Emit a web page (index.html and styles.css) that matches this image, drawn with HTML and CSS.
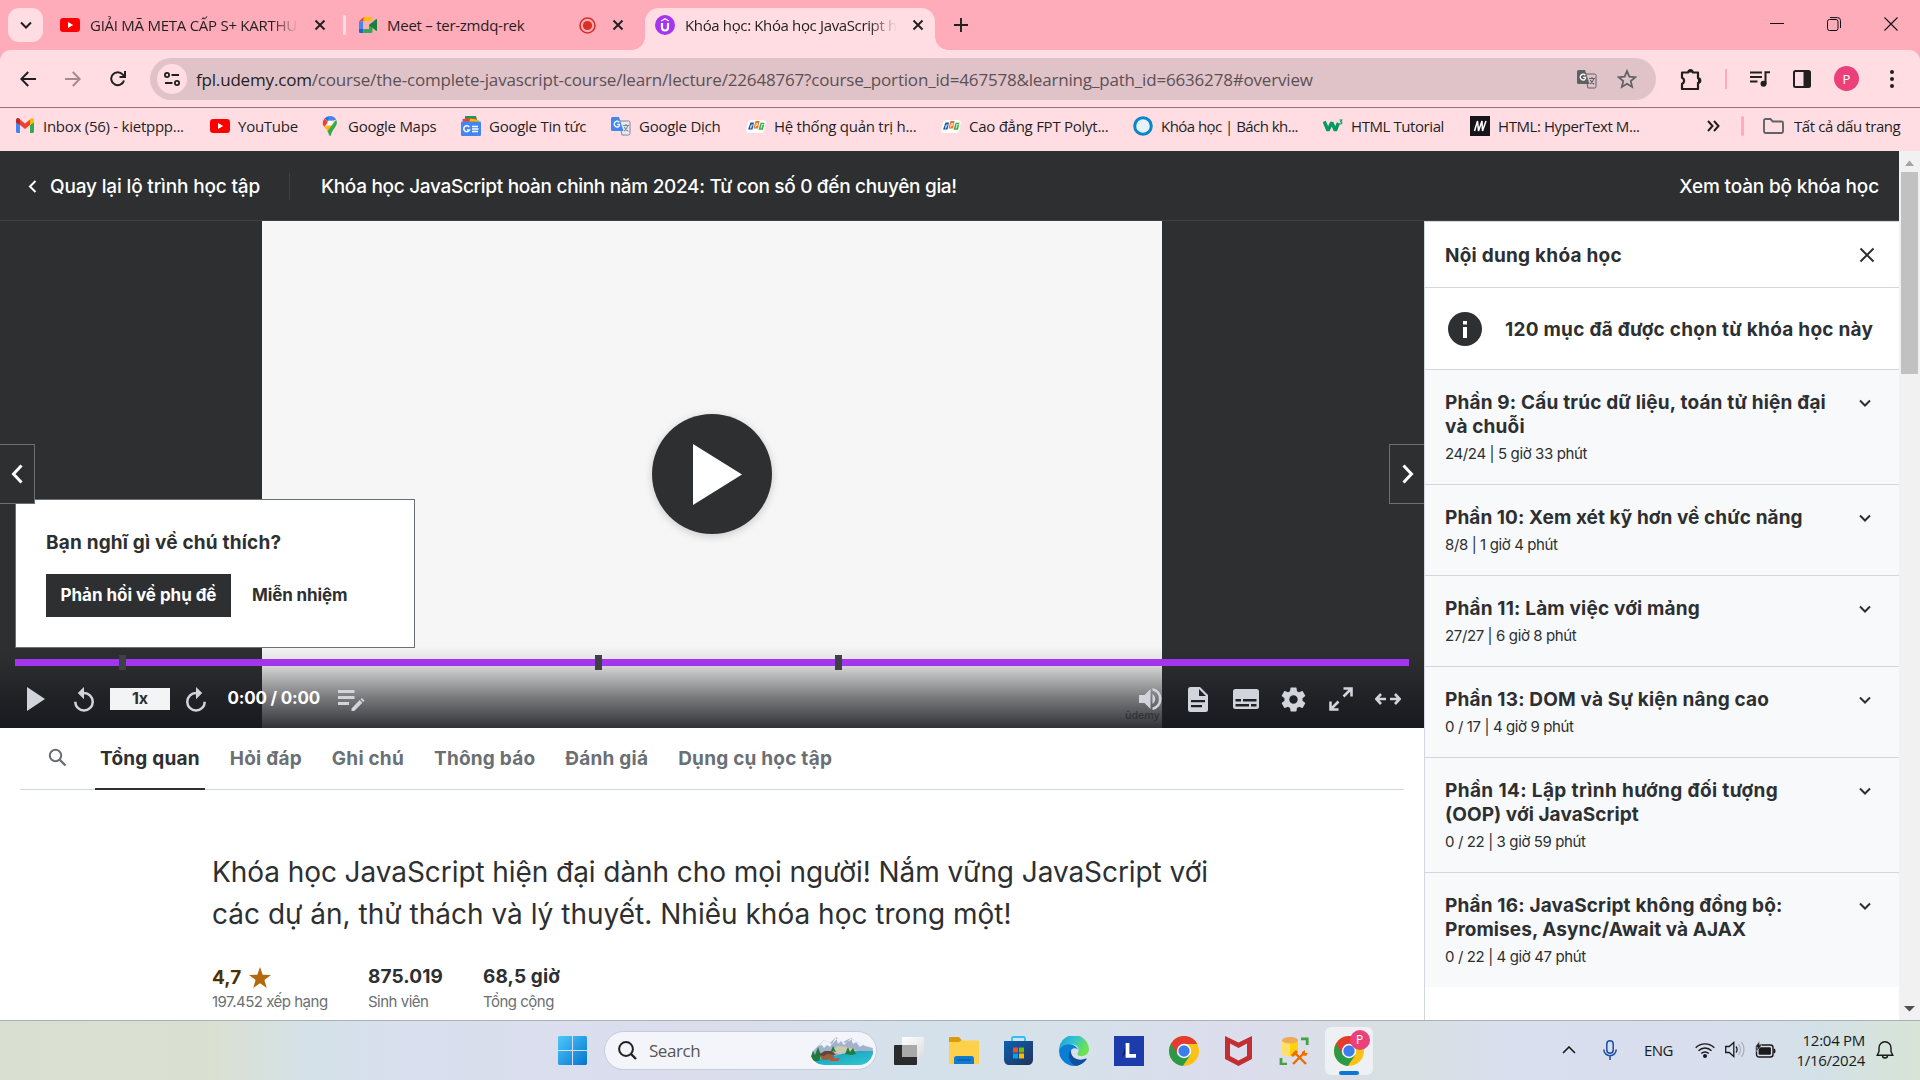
FILE: index.html
```html
<!DOCTYPE html>
<html lang="vi">
<head>
<meta charset="utf-8">
<title>Khóa học: Khóa học JavaScript hoàn chỉnh năm 2024</title>
<link rel="stylesheet" href="styles.css">
</head>
<body>
<svg class="defs" width="0" height="0">
  <defs>
    <symbol id="close" viewBox="0 0 12 12"><path d="M1.5 1.5l9 9m0-9l-9 9" fill="none" stroke="currentColor" stroke-width="1.9"/></symbol>
    <symbol id="chev" viewBox="0 0 14 14"><path d="M2 4.5l5 5 5-5" fill="none" stroke="currentColor" stroke-width="2"/></symbol>
    <symbol id="youtube" viewBox="0 0 20 14"><rect width="20" height="14" rx="3.2" fill="#f00"/><path d="M8 4l5.2 3L8 10z" fill="#fff"/></symbol>
    <symbol id="translate" viewBox="0 0 20 20"><path d="M8 5h9.5a1.5 1.5 0 011.5 1.5v11a1.5 1.5 0 01-1.5 1.5H11z" fill="var(--paper)" stroke="var(--line)"/><path d="M1.5 1H8l4.5 14H1.5A1.5 1.5 0 010 13.500v-11A1.500 1.500 0 011.500 1z" fill="var(--front)"/><path d="M8.300 6.200A2.900 2.900 0 106.200 11c1.600 0 2.500-1.100 2.400-2.700H6.200" fill="none" stroke="#fff" stroke-width="1.300"/><path d="M12 9.500h6M15 8v1.500m1.800 0c-.5 2.500-2 4.500-3.800 5.500m.3-4c.8 2 2.300 3.500 4 4.200" fill="none" stroke="var(--line)" stroke-width="1.100"/></symbol>
    <symbol id="fpt" viewBox="0 0 20 14"><path d="M4 1h14l2 2-2 9-2 2H2L0 12l2-9z" fill="#fff"/><path d="M4.500 3.500h3.500L6.500 10.500H2z" fill="#1c56a6"/><path d="M9.500 2h4L12 9.500H7.500z" fill="#f37021"/><path d="M14.500 3.800H18.500L17 10.800h-4.500z" fill="#3fae49"/><path d="M4.500 9.500l.7-3.500H7M4.500 7.800h1.500M9.500 8.500l.9-4h1.300l-.5 2H10M15.500 5.500h2M16 5.500l-.9 3.800" stroke="#fff" stroke-width=".8" fill="none"/></symbol>
    <symbol id="chrome" viewBox="0 0 30 30"><circle cx="15" cy="15" r="15" fill="#fbc116"/><path d="M15 15L2 7.500A15 15 0 0013.800 29.950L21.500 18.700z" fill="#2a9a48"/><path d="M15 15V8h13.300A15 15 0 002 7.500l6.500 11z" fill="#e33b2e"/><circle cx="15" cy="15" r="7.200" fill="#fff"/><circle cx="15" cy="15" r="5.700" fill="#3b7ded"/></symbol>
  </defs>
</svg>

<header class="browser">
  <div class="tabstrip">
    <button class="tab-search"><svg width="14" height="14"><use href="#chev"/></svg></button>
    <div class="tab tab-a">
      <svg width="20" height="14"><use href="#youtube"/></svg>
      <span class="tab-title fade">GIẢI MÃ META CẤP S+ KARTHU</span>
      <svg class="x" width="12" height="12"><use href="#close"/></svg>
    </div>
    <div class="tab tab-b">
      <svg width="18" height="16" viewBox="0 0 18 16"><path d="M4.500 0H13v4H4.500z" fill="#fbbc04"/><path d="M4.500 0v4.500H0z" fill="#ea4335"/><path d="M0 4.500h4V12H0z" fill="#4285f4"/><path d="M0 12h4.500v4H1.300A1.300 1.300 0 010 14.700z" fill="#1967d2"/><path d="M4.500 12H10V8l3.500-2.500v9.300c0 .7-.5 1.200-1.200 1.200H4.500z" fill="#34a853"/><path d="M10 8l7-5.800c.5-.4 1-.1 1 .5v10.600c0 .6-.5.900-1 .5z" fill="#188038"/></svg>
      <span class="tab-title">Meet – ter-zmdq-rek</span>
      <svg class="rec" width="17" height="17" viewBox="0 0 17 17"><circle cx="8.500" cy="8.500" r="7.500" fill="none" stroke="#d93025" stroke-width="1.600"/><circle cx="8.500" cy="8.500" r="4.600" fill="#d93025"/></svg>
      <svg class="x" width="12" height="12"><use href="#close"/></svg>
    </div>
    <div class="tab tab-c active">
      <svg width="20" height="20" viewBox="0 0 20 20"><circle cx="10" cy="10" r="10" fill="#a435f0"/><path d="M7 8v4.500a3 3 0 006 0V8" fill="none" stroke="#fff" stroke-width="2.200"/><path d="M6.200 6L10 3.700 13.800 6" fill="none" stroke="#fff" stroke-width="1.400"/></svg>
      <span class="tab-title fade">Khóa học: Khóa học JavaScript h</span>
      <svg class="x" width="12" height="12"><use href="#close"/></svg>
    </div>
    <svg class="plus" width="14" height="14" viewBox="0 0 14 14"><path d="M7 0v14M0 7h14" stroke="#1f1f1f" stroke-width="1.900"/></svg>
    <div class="winctl">
      <svg width="14" height="14" viewBox="0 0 14 14"><path d="M0 6.500h14" stroke="#111"/></svg>
      <svg width="14" height="14" viewBox="0 0 14 14" fill="none" stroke="#111"><rect x=".5" y="2.500" width="10.500" height="11" rx="2"/><path d="M3 .6h7.500a3 3 0 013 3v7.500"/></svg>
      <svg width="14" height="14" viewBox="0 0 14 14"><path d="M.5.500l13 13m0-13l-13 13" stroke="#111" stroke-width="1.100"/></svg>
    </div>
  </div>

  <div class="toolbar">
    <div class="nav">
      <svg width="16" height="16" viewBox="0 0 16 16" fill="none" stroke="#1f1f1f" stroke-width="2"><path d="M16 8H1.500M8.200 1L1.300 8l6.900 7"/></svg>
      <svg width="16" height="16" viewBox="0 0 16 16" fill="none" stroke="#a8898f" stroke-width="2"><path d="M0 8h14.500M7.800 1l6.900 7-6.900 7"/></svg>
      <svg width="16" height="16" viewBox="0 0 16 16" fill="none" stroke="#1f1f1f" stroke-width="2"><path d="M14 9.500A6.500 6.500 0 1112.800 3.600L15 6"/><path d="M15 0v6H9.500"/></svg>
    </div>
    <div class="omnibox">
      <span class="site"><svg width="16" height="14" viewBox="0 0 16 14" fill="none" stroke="#1f1f1f" stroke-width="1.800"><circle cx="3" cy="3" r="2.100"/><path d="M7.500 3H15M1 11h7.500"/><circle cx="13" cy="11" r="2.100"/></svg></span>
      <span class="url"><b>fpl.udemy.com</b>/course/the-complete-javascript-course/learn/lecture/22648767?course_portion_id=467578&amp;learning_path_id=6636278#overview</span>
      <svg class="tr grey" width="20" height="20"><use href="#translate"/></svg>
      <svg class="star" width="20" height="20" viewBox="0 0 24 24"><path d="M12 2.500l2.800 6.700 7.200.6-5.500 4.700 1.700 7.100-6.200-3.800-6.200 3.800 1.700-7.100L2 9.800l7.200-.6z" fill="none" stroke="#5f6063" stroke-width="2.100"/></svg>
    </div>
    <div class="actions">
      <svg width="22" height="22" viewBox="0 0 22 22"><path d="M2 4.500h6.200a2.300 2.300 0 014.600 0H18v5.800a2.300 2.300 0 010 4.600V21H2v-5.300a3.200 3.200 0 000-6z" fill="none" stroke="#1f1f1f" stroke-width="2.200" stroke-linejoin="round"/><path d="M8 4.500a2.500 2.500 0 015 0zM18 10a2.500 2.500 0 010 5z" fill="#1f1f1f"/></svg>
      <i class="bar"></i>
      <svg width="20" height="16" viewBox="0 0 20 16"><path d="M0 1.500h12M0 6h12M0 10.500h7.500" stroke="#1f1f1f" stroke-width="2"/><path d="M15.500 13V1.200H20" fill="none" stroke="#1f1f1f" stroke-width="2"/><circle cx="13.500" cy="12.800" r="3" fill="#1f1f1f"/></svg>
      <svg width="18" height="18" viewBox="0 0 18 18"><rect x="1" y="1" width="16" height="16" rx="1.500" fill="none" stroke="#1f1f1f" stroke-width="2"/><path d="M10.500 1H17v16h-6.500z" fill="#1f1f1f"/></svg>
      <span class="avatar">P</span>
      <svg class="dots" width="4" height="18" viewBox="0 0 4 18" fill="#1f1f1f"><circle cx="2" cy="2" r="2"/><circle cx="2" cy="9" r="2"/><circle cx="2" cy="16" r="2"/></svg>
    </div>
  </div>

  <nav class="bookmarks">
    <div class="marks">
      <a><svg width="20" height="15" viewBox="0 0 20 15"><path d="M1 2.500V13.500C1 14.300 1.600 15 2.400 15H5V7z" fill="#4285f4"/><path d="M15 7v8h2.600c.8 0 1.400-.7 1.400-1.500V2.500z" fill="#34a853"/><path d="M5 7V1.500l5 4 5-4V7l-5 4z" fill="#ea4335"/><path d="M1 4.500V2C1 .2 3 -.6 4.300 .5L5 1.200V7z" fill="#c5221f"/><path d="M15 1.200l.7-.7C17-.6 19 .2 19 2v2.500L15 7z" fill="#fbbc04"/></svg><span>Inbox (56) - kietppp...</span></a>
      <a><svg width="20" height="14"><use href="#youtube"/></svg><span>YouTube</span></a>
      <a><svg width="20" height="20" viewBox="0 0 20 20"><path d="M10 0a7 7 0 00-5.400 2.500L8 5.500z" fill="#1a73e8"/><path d="M4.600 2.500A7 7 0 004.200 11L8 6z" fill="#ea4335"/><path d="M10 0a7 7 0 016.200 3.700L10.500 5 8 5.500z" fill="#4285f4"/><path d="M4.200 11l4 4.500L16.200 3.700 12 8z" fill="#fbbc04"/><path d="M16.200 3.700C19 9.500 12.500 12.500 11 19c-.3 1.300-1.500 1.300-1.900 0-.4-1.500-1-2.700-1.700-3.800z" fill="#34a853"/><circle cx="10" cy="7" r="2.600" fill="#fff"/></svg><span>Google Maps</span></a>
      <a><svg width="20" height="20" viewBox="0 0 20 20"><path d="M4 0h11l2 7H4z" fill="#0f9d58"/><path d="M1.500 3l13-1.500L16 7H2z" fill="#ea4335"/><path d="M9 2.500l9 1.500-1 4H8z" fill="#fbbc04"/><rect y="5.500" width="20" height="14.500" rx="1.200" fill="#4285f4"/><path d="M8.300 11a3 3 0 10.200 3H6.200M11 10.500h6M11 13h6.500M11 15.500h6" fill="none" stroke="#fff" stroke-width="1.500"/></svg><span>Google Tin tức</span></a>
      <a><svg class="blue" width="20" height="20"><use href="#translate"/></svg><span>Google Dịch</span></a>
      <a><svg width="20" height="14"><use href="#fpt"/></svg><span>Hệ thống quản trị h...</span></a>
      <a><svg width="20" height="14"><use href="#fpt"/></svg><span>Cao đẳng FPT Polyt...</span></a>
      <a class="tighter"><svg width="20" height="20" viewBox="0 0 20 20"><circle cx="10" cy="10" r="8.300" fill="#e6f2fa" stroke="#0b86ca" stroke-width="3"/></svg><span>Khóa học | Bách kh...</span></a>
      <a class="tight"><svg width="20" height="14" viewBox="0 0 20 14"><path d="M1.200 2.500l3.800 9 3.700-8 3.700 8 3-7.500" fill="none" stroke="#059862" stroke-width="3.400" stroke-linejoin="bevel"/><path d="M16.500 1h2.300l-1.300 1.700c2.200.2 1.700 2.800-1 2.100" fill="none" stroke="#059862" stroke-width="1.100"/></svg><span>HTML Tutorial</span></a>
      <a class="tight"><svg width="20" height="20" viewBox="0 0 20 20"><rect width="20" height="20" fill="#15141a"/><path d="M4.500 15l3-10 1 10 3.500-10 .5 10L16 5" fill="none" stroke="#fff" stroke-width="1.500"/></svg><span>HTML: HyperText M...</span></a>
    </div>
    <svg width="13" height="12" viewBox="0 0 13 12"><path d="M1 1l4.500 5L1 11M7 1l4.500 5L7 11" fill="none" stroke="#1f1f1f" stroke-width="2"/></svg>
    <i class="bar"></i>
    <svg class="folder" width="21" height="16" viewBox="0 0 21 16"><path d="M1 13V2.500C1 1.500 1.700 1 2.500 1h5l2.300 2.500h8.700c.8 0 1.500.5 1.500 1.500v8.500c0 .8-.7 1.500-1.500 1.500h-16C1.700 15 1 14 1 13z" fill="none" stroke="#5f6368" stroke-width="1.900"/></svg>
    <span class="tight">Tất cả dấu trang</span>
  </nav>
</header>

<div class="viewport">
  <div class="page">
    <header class="course-head">
      <svg width="9" height="13" viewBox="0 0 9 13"><path d="M7.500 1L2 6.500 7.500 12" fill="none" stroke="#fff" stroke-width="2"/></svg>
      <a class="back">Quay lại lộ trình học tập</a>
      <h1>Khóa học JavaScript hoàn chỉnh năm 2024: Từ con số 0 đến chuyên gia!</h1>
      <a class="all">Xem toàn bộ khóa học</a>
    </header>

    <div class="columns">
      <main>
        <section class="player">
          <div class="frame"></div>
          <span class="watermark">ûdemy</span>
          <div class="shade"></div>
          <div class="bigplay"><svg width="49" height="61" viewBox="0 0 50 62"><path d="M0 0l50 31L0 62z" fill="#fff"/></svg></div>
          <div class="popup">
            <h2>Bạn nghĩ gì về chú thích?</h2>
            <div class="popup-row"><button class="solid">Phản hồi về phụ đề</button><button class="ghost">Miễn nhiệm</button></div>
          </div>
          <div class="side prev"><svg width="12" height="20" viewBox="0 0 12 20"><path d="M10.500 1.500L2.500 10l8 8.500" fill="none" stroke="#fff" stroke-width="3"/></svg></div>
          <div class="side next"><svg width="12" height="20" viewBox="0 0 12 20"><path d="M1.500 1.500l8 8.500-8 8.500" fill="none" stroke="#fff" stroke-width="3"/></svg></div>
          <div class="progress"><i class="m1"></i><i class="m2"></i><i class="m3"></i></div>
          <div class="controls">
            <span class="c"><svg width="18" height="24" viewBox="0 0 18 24"><path d="M0 0l18 12L0 24z"/></svg></span>
            <span class="c back10"><svg width="20" height="25" viewBox="0 0 20 25"><path d="M10 0v4.800a10 10 0 11-10 10h2.500A7.500 7.500 0 1010 7.300v5L3.800 6z"/></svg></span>
            <span class="speed">1x</span>
            <span class="c"><svg width="20" height="25" viewBox="0 0 20 25"><path d="M10 0v4.800a10 10 0 1010 10h-2.500A7.500 7.500 0 1110 7.300v5L16.200 6z"/></svg></span>
            <span class="time">0:00 / 0:00</span>
            <svg class="note" width="27" height="23" viewBox="0 0 27 23"><path d="M0 1h16.500v3H0zM0 7h16.500v3H0zM0 13h11v3H0zM13.500 19.500l8.200-8.500 2.700 2.700-8.200 8.300h-2.700zM22.500 10.200l1.300-1.300 2.800 2.800-1.300 1.300z"/></svg>
            <div class="right">
              <span class="c"><svg width="24" height="24" viewBox="0 0 24 24"><path d="M0 8v8h5.500l6 6V2l-6 6zM13.500 7v10a6 6 0 000-10zM13.500 1v2.600a8.700 8.700 0 010 16.800V23a11.200 11.200 0 000-22z"/></svg></span>
              <span class="c"><svg width="20" height="25" viewBox="0 0 20 25"><path fill-rule="evenodd" d="M2.500 0H12l8 8v14.500a2.500 2.500 0 01-2.500 2.500h-15A2.500 2.500 0 010 22.500v-20A2.500 2.500 0 012.500 0zM11 2v7h7zM3 13v2.200h14V13zM3 18v2.200h11V18z"/></svg></span>
              <span class="c"><svg width="26" height="20" viewBox="0 0 26 20"><path fill-rule="evenodd" d="M2.500 0h21A2.500 2.500 0 0126 2.500v15a2.500 2.500 0 01-2.500 2.500h-21A2.500 2.500 0 010 17.500v-15A2.500 2.500 0 012.500 0zM2.500 10v2.500H8V10zm7.500 0v2.500h13.500V10zM2.500 15v2.500H16V15zm15.500 0v2.500h5.500V15z"/></svg></span>
              <span class="c"><svg width="29" height="29" viewBox="0 0 24 24"><path d="M19.430 12.980c.04-.32.070-.64.070-.98s-.03-.66-.07-.98l2.110-1.650c.19-.15.240-.42.120-.64l-2-3.460c-.12-.22-.39-.3-.61-.22l-2.490 1c-.52-.4-1.080-.73-1.690-.98l-.38-2.650A.488.488 0 0014 2h-4c-.25 0-.46.180-.49.420l-.38 2.650c-.61.250-1.170.59-1.690.98l-2.490-1c-.23-.09-.49 0-.61.220l-2 3.460c-.13.220-.07.490.12.640l2.110 1.650c-.04.320-.07.650-.07.980s.03.660.07.980l-2.110 1.650c-.19.150-.24.420-.12.640l2 3.460c.12.220.39.300.61.220l2.490-1c.52.400 1.080.730 1.690.980l.38 2.650c.03.240.24.420.49.420h4c.25 0 .46-.18.49-.42l.38-2.650c.61-.25 1.170-.59 1.690-.98l2.490 1c.23.090.49 0 .61-.22l2-3.460c.12-.22.070-.49-.12-.64l-2.110-1.650zM12 15.500c-1.930 0-3.500-1.570-3.500-3.500s1.570-3.500 3.500-3.500 3.500 1.570 3.500 3.500-1.570 3.500-3.500 3.500z"/></svg></span>
              <span class="c"><svg class="stroke" width="24" height="24" viewBox="0 0 24 24"><path d="M14.500 9.500l8-8M14.500 1.500H22.500v8M9.500 14.500l-8 8M1.500 14.500v8H9.500"/></svg></span>
              <span class="c"><svg class="stroke" width="26" height="12" viewBox="0 0 26 12"><path d="M11 6H1.500M6 1L1.300 6 6 11M15 6h9.500M20 1l4.700 5L20 11"/></svg></span>
            </div>
          </div>
        </section>

        <nav class="tabs">
          <svg width="19" height="19" viewBox="0 0 19 19"><circle cx="7.500" cy="7.500" r="5.700" fill="none" stroke="#6a6f73" stroke-width="2"/><path d="M11.500 11.500l6 6" stroke="#6a6f73" stroke-width="2.400"/></svg>
          <a class="on">Tổng quan</a><a>Hỏi đáp</a><a>Ghi chú</a><a>Thông báo</a><a>Đánh giá</a><a>Dụng cụ học tập</a>
        </nav>

        <section class="overview">
          <p class="lead">Khóa học JavaScript hiện đại dành cho mọi người! Nắm vững JavaScript với<br><span>các dự án, thử thách và lý thuyết. Nhiều khóa học trong một!</span></p>
          <div class="stats">
            <div class="rating"><b>4,7 <svg width="22" height="21" viewBox="0 0 22 21"><path d="M11 0l2.700 7.700 8.300.2-6.600 5 2.400 8-6.800-4.700L4.200 21l2.400-8L0 7.900l8.300-.2z" fill="#b4690e"/></svg></b><small>197.452 xếp hạng</small></div>
            <div><b>875.019</b><small>Sinh viên</small></div>
            <div><b>68,5 giờ</b><small>Tổng cộng</small></div>
          </div>
        </section>
      </main>

      <aside>
        <div class="aside-head"><h2>Nội dung khóa học</h2><svg width="16" height="16" viewBox="0 0 16 16"><path d="M1.500 1.500l13 13m0-13l-13 13" stroke="#2d2f31" stroke-width="2"/></svg></div>
        <div class="info"><svg width="34" height="34" viewBox="0 0 34 34"><circle cx="17" cy="17" r="17" fill="#2d2f31"/><path d="M15 9h4v3.500h-4zM15 15h4v11h-4z" fill="#fff"/></svg><span>120 mục đã được chọn từ khóa học này</span></div>
        <div class="part"><div><h3>Phần 9: Cấu trúc dữ liệu, toán tử hiện đại<br>và chuỗi</h3><small>24/24 | 5 giờ 33 phút</small></div><svg width="14" height="14"><use href="#chev"/></svg></div>
        <div class="part"><div><h3 class="snug">Phần 10: Xem xét kỹ hơn về chức năng</h3><small>8/8 | 1 giờ 4 phút</small></div><svg width="14" height="14"><use href="#chev"/></svg></div>
        <div class="part"><div><h3>Phần 11: Làm việc với mảng</h3><small>27/27 | 6 giờ 8 phút</small></div><svg width="14" height="14"><use href="#chev"/></svg></div>
        <div class="part"><div><h3>Phần 13: DOM và Sự kiện nâng cao</h3><small>0 / 17 | 4 giờ 9 phút</small></div><svg width="14" height="14"><use href="#chev"/></svg></div>
        <div class="part"><div><h3 class="wide">Phần 14: Lập trình hướng đối tượng<br></h3><h3 class="snug">(OOP) với JavaScript</h3><small>0 / 22 | 3 giờ 59 phút</small></div><svg width="14" height="14"><use href="#chev"/></svg></div>
        <div class="part"><div><h3>Phần 16: JavaScript không đồng bộ:</h3><h3 class="snug">Promises, Async/Await và AJAX</h3><small>0 / 22 | 4 giờ 47 phút</small></div><svg width="14" height="14"><use href="#chev"/></svg></div>
      </aside>
    </div>
  </div>
  <div class="scrollbar">
    <svg width="9" height="6" viewBox="0 0 9 6"><path d="M0 6l4.500-5.500L9 6z" fill="#a3a3a3"/></svg>
    <i></i>
    <svg class="down" width="11" height="6" viewBox="0 0 11 6"><path d="M0 0l5.500 5.500L11 0z" fill="#505050"/></svg>
  </div>
</div>

<footer class="taskbar">
  <svg class="start" width="29" height="29" viewBox="0 0 29 29"><defs><linearGradient id="w" x1="0" y1="0" x2="1" y2="1" gradientUnits="objectBoundingBox"><stop offset="0" stop-color="#4cc9fb"/><stop offset="1" stop-color="#0673cf"/></linearGradient></defs><path d="M1 0h13v14H0V1zM15 0h13l1 1v13H15zM0 15h14v14H1l-1-1zM15 15h14v13l-1 1H15z" fill="url(#w)"/></svg>
  <div class="search">
    <svg width="19" height="19" viewBox="0 0 19 19"><circle cx="8" cy="8" r="6.900" fill="none" stroke="#222" stroke-width="2"/><path d="M13 13l5 5" stroke="#222" stroke-width="2.400"/></svg>
    <span>Search</span>
    <svg class="scene" width="63" height="28" viewBox="0 0 63 28">
      <defs><linearGradient id="lake" x1="0" y1="0" x2="1" y2="1"><stop offset="0" stop-color="#1597b8"/><stop offset="1" stop-color="#2fc9d3"/></linearGradient></defs>
      <path d="M2 15L9 8l5-5 6 3 6-6 7 5 8-4 8 5 7 3 7 2v7l-10 6H3z" fill="#a3b1cd"/>
      <path d="M14 3l-5 6 3-1 2 3 3-3 3 2 6-10 2 7 3-3 3 4 7-7 2 6 3-2 4 5 3-2 10 3-7-3-7-2-6-4-8 4-7-5-6 6z" fill="#f0f3fb"/>
      <path d="M20 14l8-5 10 1 10 4-10 6z" fill="#cdc9ab"/>
      <path d="M63 14v6c-2 6-7 8-12 8H14c-6 0-9-3-12-6 14 0 34-7 45-8z" fill="url(#lake)"/>
      <path d="M0 22l3-8 2 4 3-8 3 8-2 6H4zM35 17l3-7 2 5 3-4 3 6-5 1zM21 14l2-5 3 6z" fill="#1e7d3c"/>
      <path d="M9 18l6-4 9 2v6l-11 1z" fill="#9a6038"/><path d="M8 18l7-4 7 0 4 4-9-1-3 2z" fill="#5f463f"/>
      <path d="M20 22l10-1-2 3h-8z" fill="#dc4632"/>
    </svg>
  </div>
  <div class="apps">
    <span><svg width="30" height="28" viewBox="0 0 30 28"><defs><linearGradient id="tv" x1="0" y1="0" x2="1" y2="1"><stop offset="0" stop-color="#fff"/><stop offset="1" stop-color="#dcdddf"/></linearGradient></defs><rect y="8" width="23" height="20" rx="1" fill="#2b2b2b"/><rect x="8" width="22" height="20" rx="1" fill="url(#tv)"/><path d="M8 8h15v12H8z" fill="#a9a9a9"/></svg></span>
    <span><svg width="30" height="27" viewBox="0 0 30 27"><path d="M0 1.500C0 .5.500 0 1.500 0H10l2.500 3v5H0z" fill="#dc9a06"/><path d="M0 5h10l2-1.500h16.500c1 0 1.500.5 1.500 1.500v22H0z" fill="#ffd04a"/><path d="M5 27v-5.500C5 20 6 19 7.500 19h15c1.500 0 2.500 1 2.500 2.500V27z" fill="#117bd0"/><path d="M8.500 23h13" stroke="#0b4f8c"/></svg></span>
    <span><svg width="29" height="29" viewBox="0 0 29 29"><path d="M8 6V2.500C8 1.500 8.500 1 9.500 1h10c1 0 1.500.5 1.500 1.500V6" fill="none" stroke="#2cc0f3" stroke-width="1.800"/><defs><linearGradient id="ms" x1="0" y1="0" x2="1" y2="1"><stop offset="0" stop-color="#0a62b4"/><stop offset="1" stop-color="#233158"/></linearGradient></defs><path d="M0 5h29v18.500c0 3.500-2 5.500-5.500 5.500h-18C2 29 0 27 0 23.500z" fill="url(#ms)"/><path d="M9 11.500h5v5H9z" fill="#f25022"/><path d="M15 11.500h5v5h-5z" fill="#7fba00"/><path d="M9 17.500h5v5H9z" fill="#00a4ef"/><path d="M15 17.500h5v5h-5z" fill="#ffb900"/></svg></span>
    <span><svg width="30" height="30" viewBox="0 0 30 30"><defs><linearGradient id="e1" x1="0" y1="0" x2="1" y2=".4"><stop offset="0" stop-color="#2298d8"/><stop offset=".5" stop-color="#2fc3d4"/><stop offset="1" stop-color="#6fe34d"/></linearGradient></defs><path d="M0 15A15 15 0 0130 13c0 4.500-3.500 7-7 7-4 0-5.500-1.500-4-3.500 2-4-1-8-6-8S2 11 0 15z" fill="url(#e1)"/><path d="M0 15c1-4 5-7 10.500-6.800 4 .2 7.500 2.500 8.300 5.300-4-3-8 0-7 4.500 1 5 7 8.500 15.500 5.500A15 15 0 010 15z" fill="#0a7ed6"/><path d="M12 14c-4 4-2.500 13 5 15.900 4-.4 8-3 10.600-6.700.3-.6 0-.9-.6-.6-7 3.200-16-.5-15-8.600z" fill="#0f4f9d"/></svg></span>
    <span><svg width="30" height="30" viewBox="0 0 30 30"><path d="M0 0h30v30H0z" fill="#1d3cab"/><path d="M8 21l4-13v9z" fill="#0c1f63"/><path d="M13.500 7v12.800H22" fill="none" stroke="#fff" stroke-width="3.800"/></svg></span>
    <span><svg width="30" height="30"><use href="#chrome"/></svg></span>
    <span><svg width="27" height="30" viewBox="0 0 27 30"><path d="M0 0l13.500 6.500L27 0v23l-13.500 7L0 23zM5 7.500V20l8.500 4.500L22 20V7.500L13.500 12z" fill="#c22e31" fill-rule="evenodd"/></svg></span>
    <span><svg width="30" height="28" viewBox="0 0 30 28"><path d="M3 3v14c0 3 16 3 16 0V3z" fill="#ffe06a"/><path d="M11 3h8v14c0 2-4 2.300-8 2.300z" fill="#fdd20a"/><ellipse cx="11" cy="3.200" rx="8" ry="3.200" fill="#efaa55"/><path d="M22 1.800h6.200V8M2 21v6.200h6" fill="none" stroke="#43a047" stroke-width="2.800"/><path d="M14 27l11-11M27 27L15 15" stroke="#ef6c00" stroke-width="2.400"/><path d="M12 18l5-5 2 2-5 5zM23 15l3-2v3h3l-2 3-4-1z" fill="#ef6c00"/></svg></span>
    <span class="current"><svg width="30" height="30"><use href="#chrome"/></svg><i>P</i></span>
  </div>
  <div class="tray">
    <svg class="up" width="14" height="8" viewBox="0 0 14 8"><path d="M1 7l6-6 6 6" fill="none" stroke="#1a1a1a" stroke-width="1.600"/></svg>
    <svg class="mic" width="14" height="20" viewBox="0 0 14 20" fill="none" stroke="#1a4fa3" stroke-width="1.500"><rect x="3.800" y=".8" width="6.400" height="12.400" rx="3.200"/><path d="M.8 9.500a6.200 6.200 0 0012.400 0M7 16v4"/></svg>
    <span class="lang">ENG</span>
    <svg class="wifi" width="20" height="16" viewBox="0 0 20 16" fill="none" stroke="#1a1a1a" stroke-width="1.400"><path d="M.7 5.800a13 13 0 0118.600 0M3.500 8.800a9 9 0 0113 0M6.300 11.600a5.200 5.200 0 017.400 0"/><circle cx="10" cy="14" r="1.300" fill="#1a1a1a"/></svg>
    <svg class="vol" width="21" height="17" viewBox="0 0 21 17" fill="none" stroke="#1a1a1a" stroke-width="1.300"><path d="M.7 5.500h3.500L8.800 1.500v14L4.200 11.500H.7zM11 5.500a5 5 0 010 6"/><path d="M13.500 3.200a8.500 8.500 0 010 10.600M16.500 1.200a12 12 0 010 14.600" stroke="#a9b0bb"/></svg>
    <svg class="bat" width="21" height="17" viewBox="0 0 21 17"><rect x="1.500" y="4" width="16.500" height="12" rx="2.500" fill="none" stroke="#1a1a1a" stroke-width="1.400"/><rect x="3.600" y="6.200" width="12.300" height="7.600" rx="1" fill="#1a1a1a"/><path d="M18.500 7.500c1.500 0 2 .8 2 2.500s-.5 2.500-2 2.500z" fill="#1a1a1a"/><path d="M4.500 0L0 6.200h2.500L1.500 10.500 7 4H4.300z" fill="#1a1a1a" stroke="#d5e1ea" stroke-width=".5"/></svg>
    <div class="clock"><span>12:04 PM</span><span>1/16/2024</span></div>
    <svg class="bell" width="18" height="18" viewBox="0 0 18 18" fill="none" stroke="#1a1a1a" stroke-width="1.400"><path d="M1.200 14.300L3 10.500V6.700a6 6 0 0112 0v3.800l1.800 3.800zM6.500 14.500a2.500 2.500 0 005 0"/></svg>
  </div>
</footer>
</body>
</html>
```

FILE: styles.css
```css
* { box-sizing: border-box; }
body { margin: 0; width: 1920px; height: 1080px; overflow: hidden; display: flex; flex-direction: column; font-family: "Open Sans", "Noto Sans", sans-serif; color: #1f1f1f; background: #fff; }
svg { display: block; flex: none; }
h1, h2, h3, p { margin: 0; }
button { border: 0; padding: 0; }
.defs { position: absolute; }

/* Browser frame */
.browser { height: 151px; flex: none; background: #ffacba; font-size: 15px; letter-spacing: -.26px; }
.tabstrip { height: 50px; display: flex; align-items: flex-start; padding-left: 8px; }
.tab-search { width: 35px; height: 34px; margin: 8px 8px 0 0; border-radius: 11px; background: #ffdde3; display: flex; align-items: center; justify-content: center; color: #1f1f1f; }
.tab { height: 42px; margin-top: 8px; display: flex; align-items: center; padding-bottom: 8px; color: #1f1f1f; white-space: nowrap; }
.tab-title { flex: 1; margin-right: 15px; }
.tab-a { width: 289px; padding-left: 9px; }
.tab-a .tab-title { margin-left: 10px; }
.tab-a .x { margin-right: 14px; }
.tab-b { width: 305px; padding-left: 19px; position: relative; }
.tab-b::before { content: ""; position: absolute; left: 3px; top: 7px; width: 3px; height: 20px; border-radius: 2px; background: #ffdde3; }
.tab-b .tab-title { margin-left: 10px; }
.tab-b .rec { margin-right: 16px; }
.tab-b .x { margin-right: 21px; }
.tab-c { width: 290px; padding-left: 10px; background: #ffdde3; border-radius: 14px 14px 0 0; position: relative; letter-spacing: -.36px; }
.tab-c::before, .tab-c::after { content: ""; position: absolute; bottom: 0; width: 13px; height: 13px; }
.tab-c::before { left: -13px; background: radial-gradient(circle at 0 0, transparent 12.5px, #ffdde3 13px); }
.tab-c::after { right: -13px; background: radial-gradient(circle at 100% 0, transparent 12.5px, #ffdde3 13px); }
.tab-c .tab-title { margin-left: 10px; }
.tab-c .x { margin-right: 14px; }
.fade { -webkit-mask-image: linear-gradient(90deg, #000 calc(100% - 28px), transparent); mask-image: linear-gradient(90deg, #000 calc(100% - 28px), transparent); }
.plus { margin: 18px 0 0 19px; }
.winctl { margin: 17px 22px 0 auto; display: flex; gap: 43px; }

.toolbar { height: 58px; background: #ffdde3; border-radius: 11px 11px 0 0; border-bottom: 1px solid #94757c; display: flex; align-items: center; padding: 0 26px 0 20px; }
.nav { display: flex; gap: 29px; width: 130px; }
.omnibox { width: 1506px; height: 42px; border-radius: 21px; background: #e0c3c9; display: flex; align-items: center; padding: 0 19px 0 7px; }
.site { width: 30px; height: 30px; border-radius: 50%; background: #ffdde3; display: flex; align-items: center; justify-content: center; }
.url { margin-left: 9px; padding-top: 1px; font-size: 17px; letter-spacing: -.18px; color: #5b5054; flex: 1; white-space: nowrap; }
.url b { font-weight: 400; color: #1f1f1f; }
.tr { margin-right: 20px; }
.grey { --paper: #e0c3c9; --line: #5f6063; --front: #5f6063; }
.blue { --paper: #e8eaed; --line: #7b8794; --front: #4285f4; }
.actions { flex: 1; display: flex; align-items: center; gap: 23px; margin-left: 24px; }
.actions .bar { width: 2px; height: 20px; background: #ffacba; }
.dots { margin-left: auto; }
.avatar { width: 25px; height: 25px; border-radius: 50%; background: #ec407a; color: #fff; font-size: 13px; display: flex; align-items: center; justify-content: center; letter-spacing: 0; }

.bookmarks { height: 43px; background: #ffdde3; display: flex; align-items: center; padding: 0 19px 8px 15px; white-space: nowrap; }
.marks { display: grid; grid-template-columns: 195px 110px 141px 150px 135px 195px 192px 190px 147px 237px; align-items: center; }
.marks a { display: flex; align-items: center; gap: 8px; }
.tight { letter-spacing: -.42px; }
.tighter { letter-spacing: -.54px; }
.bookmarks .bar { width: 3px; height: 20px; background: #ffacba; margin: 0 19px 0 21px; border-radius: 2px; }
.folder { margin-right: 10px; }

/* Page */
.viewport { height: 869px; flex: none; display: flex; font-family: Inter, "Noto Sans", sans-serif; color: #2d2f31; }
.page { width: 1899px; }
.course-head { height: 70px; background: #2d2f31; border-bottom: 1px solid #3e4143; display: flex; align-items: center; padding: 2px 20px 0 28px; color: #fff; font-size: 19px; font-weight: 500; letter-spacing: -.16px; white-space: nowrap; }
.back { margin-left: 13px; width: 240px; height: 27px; line-height: 27px; border-right: 1px solid #3e4143; }
.course-head h1 { font: inherit; margin-left: 31px; letter-spacing: -.31px; }
.all { margin-left: auto; }
.columns { display: flex; height: 799px; }
main { width: 1424px; }
.player { height: 507px; background: #2d2f31; position: relative; }
.frame { width: 900px; height: 507px; margin-left: 262px; background: #f6f6f6; }
.shade { position: absolute; inset: auto 0 0 0; height: 82px; background: linear-gradient(rgba(22,23,28,0), rgba(22,23,28,.1) 20%, rgba(22,23,28,.55) 62%, rgba(22,23,28,.88)); }
.watermark { position: absolute; left: 1125px; top: 487px; font-size: 10.5px; line-height: 16px; font-weight: 600; color: #8a8a8a; }
.bigplay { position: absolute; left: 652px; top: 193px; width: 120px; height: 120px; border-radius: 50%; background: #2d2f31; box-shadow: 0 2px 8px rgba(0,0,0,.18); display: flex; align-items: center; padding-left: 41px; }
.popup { position: absolute; left: 15px; top: 278px; width: 400px; height: 149px; background: #fff; border: 1px solid #6a6f73; padding: 31px 30px 0; }
.popup h2 { font-size: 19px; line-height: 24px; letter-spacing: .18px; }
.popup-row { display: flex; align-items: center; margin-top: 19px; }
.popup button { height: 43px; padding-bottom: 1px; font: 700 17px Inter, "Noto Sans", sans-serif; letter-spacing: -.03px; color: #2d2f31; background: none; }
.popup .solid { width: 185px; background: #2d2f31; color: #fff; }
.popup .ghost { margin-left: 21px; letter-spacing: -.13px; }
.side { position: absolute; top: 223px; width: 35px; height: 60px; background: #2d2f31; border: 1px solid #6a6f73; display: flex; align-items: center; justify-content: center; }
.prev { left: 0; border-left: 0; padding-right: 1px; }
.next { right: 0; border-right: 0; padding-left: 1px; }
.progress { position: absolute; left: 15px; right: 15px; top: 438px; height: 7px; background: #a335ee; }
.progress i { position: absolute; top: -4px; width: 7px; height: 15px; background: #3e4143; }
.m1 { left: 104px; }
.m2 { left: 580px; }
.m3 { left: 820px; }
.controls { position: absolute; left: 0; right: 0; top: 454px; height: 48px; display: flex; align-items: center; padding: 0 12px; color: #fff; }
.controls svg { fill: #d1d5db; }
.controls .stroke { fill: none; stroke: #d1d5db; stroke-width: 2.6; }
.c { width: 47.5px; display: flex; align-items: center; justify-content: center; }
.back10 { padding-left: 2px; }
.speed { width: 60px; height: 22px; margin: 0 2px 0 3px; background: #f3f4f6; color: #2d2f31; font-weight: 700; font-size: 16px; line-height: 21px; text-align: center; }
.time { margin-left: 8px; width: 110px; padding-bottom: 2px; font-weight: 700; font-size: 17px; letter-spacing: -.2px; }
.note { margin-top: 3px; }
.right { margin-left: auto; display: flex; }

.tabs { height: 62px; margin: 0 20px; border-bottom: 1px solid #d1d7dc; display: flex; align-items: flex-start; font-size: 19px; font-weight: 700; color: #6a6f73; letter-spacing: .22px; white-space: nowrap; }
.tabs svg { margin: 20px 28px 0 28px; }
.tabs a { line-height: 62px; height: 62px; margin-right: 30px; }
.tabs .on { padding: 0 5px; margin-right: 25px; color: #2d2f31; border-bottom: 2px solid #2d2f31; }

.overview { padding: 61px 0 0 212px; }
.lead { font-size: 28px; line-height: 42px; letter-spacing: -.07px; white-space: nowrap; }
.lead span { letter-spacing: .01px; }
.stats { display: flex; margin-top: 29px; }
.stats > div { width: 115px; }
.stats > .rating { width: 156px; }
.stats b { display: flex; align-items: center; gap: 7px; font-size: 19px; line-height: 26px; height: 26px; letter-spacing: .13px; }
.rating b { color: #4d3105; padding-top: 2px; }
.rating b svg { margin-top: -2px; }
.stats small { display: block; font-size: 15px; line-height: 24px; letter-spacing: -.5px; color: #6a6f73; }

aside { width: 475px; border-left: 1px solid #d1d7dc; font-size: 19px; letter-spacing: .2px; white-space: nowrap; }
aside h2, aside h3 { font-size: 19px; line-height: 24px; font-weight: 700; }
.aside-head { height: 67px; border-top: 1px solid #d1d7dc; border-bottom: 1px solid #d1d7dc; display: flex; align-items: center; justify-content: space-between; padding: 0 24px 0 20px; }
.aside-head h2 { padding-top: 2px; letter-spacing: .24px; }
.info { height: 82px; display: flex; align-items: center; padding-left: 23px; gap: 23px; font-weight: 700; border-bottom: 1px solid #d1d7dc; letter-spacing: .26px; }
.info span { padding-top: 2px; }
.part { background: #f7f9fb; border-bottom: 1px solid #d1d7dc; padding: 21px 27px 20px 20px; display: flex; justify-content: space-between; }
.part:last-child { border: 0; }
.part h3 { letter-spacing: .17px; }
.part .snug { letter-spacing: .07px; }
.part .wide { letter-spacing: .38px; }
.part svg { margin-top: 5px; }
.part small { display: block; margin-top: 4px; font-size: 15px; line-height: 21px; letter-spacing: -.38px; }

.scrollbar { width: 21px; background: #f1f1f1; display: flex; flex-direction: column; align-items: center; padding: 9px 0 8px; }
.scrollbar i { width: 17px; height: 202px; margin-top: 6px; background: #c1c1c1; }
.down { margin-top: auto; }

/* Taskbar */
.taskbar { height: 60px; border-top: 1px solid #abb0b8; display: flex; align-items: center; background: linear-gradient(90deg, #d9e0d2 0, #dae0d1 208px, #d4e1e8 310px, #d9dfee 404px, #dbdded 700px, #d5e1ea 906px, #d6e1ea 1078px, #dcdded 1237px, #d8e0e2 1400px, #d9dfee 1506px, #d9deee 1700px, #d3e1e8 1815px, #d8e4d6 1920px); color: #1a1a1a; font-size: 15px; }
.start { margin-left: 558px; }
.search { width: 273px; height: 39px; margin-left: 17px; border-radius: 20px; background: #f3f5fa; border: 1px solid #c5cbda; display: flex; align-items: center; padding: 0 3px 0 13px; }
.search span { margin-left: 12px; font-size: 17px; letter-spacing: -.45px; color: #555; flex: 1; }
.scene { border-radius: 14px; }
.apps { display: flex; margin-left: 4px; }
.apps span { width: 55px; height: 48px; display: flex; align-items: center; justify-content: center; }
.apps .current { width: 48px; margin-left: 3.500px; background: #edf1f4; border-radius: 6px; position: relative; }
.current::after { content: ""; position: absolute; left: 14px; bottom: 0; width: 20px; height: 4px; border-radius: 2px; background: #0a78d4; }
.current i { position: absolute; left: 25px; top: 3px; width: 20px; height: 20px; border-radius: 50%; background: #ec407a; color: #fff; font: 12px/20px "Open Sans", sans-serif; text-align: center; }
.tray { margin-left: auto; display: flex; align-items: center; padding: 0 26px 2px 0; }
.mic { margin-left: 27px; }
.lang { margin-left: 27px; width: 51px; letter-spacing: -.6px; }
.vol { margin-left: 10px; }
.bat { margin-left: 9px; }
.clock { width: 89px; display: flex; flex-direction: column; align-items: flex-end; line-height: 20px; letter-spacing: -.28px; }
.bell { margin-left: 11px; }
```
